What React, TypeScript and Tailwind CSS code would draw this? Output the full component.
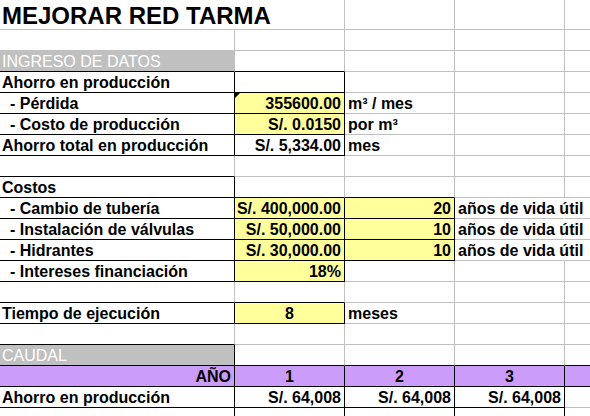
import React from "react";

type Fill = "yellow" | "gray" | "purple" | undefined;
type Align = "l" | "li" | "u" | "r" | "c";
type Cell = { t?: string; a?: Align; fill?: Fill; tri?: boolean; noRight?: boolean };
type Row = { cells: Cell[]; box: number[]; title?: boolean };

const E: Cell = {};

const rows: Row[] = [
  { title: true, cells: [{ t: "MEJORAR RED TARMA" }, E, E, E, E], box: [0, 0, 0, 0, 0] },
  { cells: [E, E, E, E, E], box: [0, 0, 0, 0, 0] },
  { cells: [{ t: "INGRESO DE DATOS", a: "l", fill: "gray" }, E, E, E, E], box: [0, 0, 0, 0, 0] },
  { cells: [{ t: "Ahorro en producción", a: "l" }, E, E, E, E], box: [1, 1, 0, 0, 0] },
  {
    cells: [{ t: "- Pérdida", a: "li" }, { t: "355600.00", a: "r", fill: "yellow", tri: true }, { t: "m³ / mes", a: "u" }, E, E],
    box: [1, 1, 0, 0, 0],
  },
  {
    cells: [{ t: "- Costo de producción", a: "li" }, { t: "S/. 0.0150", a: "r", fill: "yellow" }, { t: "por m³", a: "u" }, E, E],
    box: [1, 1, 0, 0, 0],
  },
  {
    cells: [{ t: "Ahorro total en producción", a: "l" }, { t: "S/. 5,334.00", a: "r" }, { t: "mes", a: "u" }, E, E],
    box: [1, 1, 0, 0, 0],
  },
  { cells: [E, E, E, E, E], box: [0, 0, 0, 0, 0] },
  { cells: [{ t: "Costos", a: "l" }, E, E, E, E], box: [1, 0, 0, 0, 0] },
  {
    cells: [
      { t: "- Cambio de tubería", a: "li" },
      { t: "S/. 400,000.00", a: "r", fill: "yellow" },
      { t: "20", a: "r", fill: "yellow" },
      { t: "años de vida útil", a: "u", noRight: true },
      E,
    ],
    box: [1, 1, 1, 0, 0],
  },
  {
    cells: [
      { t: "- Instalación de válvulas", a: "li" },
      { t: "S/. 50,000.00", a: "r", fill: "yellow" },
      { t: "10", a: "r", fill: "yellow" },
      { t: "años de vida útil", a: "u", noRight: true },
      E,
    ],
    box: [1, 1, 1, 0, 0],
  },
  {
    cells: [
      { t: "- Hidrantes", a: "li" },
      { t: "S/. 30,000.00", a: "r", fill: "yellow" },
      { t: "10", a: "r", fill: "yellow" },
      { t: "años de vida útil", a: "u", noRight: true },
      E,
    ],
    box: [1, 1, 1, 0, 0],
  },
  {
    cells: [{ t: "- Intereses financiación", a: "li" }, { t: "18%", a: "r", fill: "yellow" }, E, E, E],
    box: [1, 1, 0, 0, 0],
  },
  { cells: [E, E, E, E, E], box: [0, 0, 0, 0, 0] },
  {
    cells: [{ t: "Tiempo de ejecución", a: "l" }, { t: "8", a: "c", fill: "yellow" }, { t: "meses", a: "u" }, E, E],
    box: [1, 1, 0, 0, 0],
  },
  { cells: [E, E, E, E, E], box: [0, 0, 0, 0, 0] },
  { cells: [{ t: "CAUDAL", a: "l", fill: "gray" }, E, E, E, E], box: [1, 0, 0, 0, 0] },
  {
    cells: [
      { t: "AÑO", a: "r", fill: "purple" },
      { t: "1", a: "c", fill: "purple" },
      { t: "2", a: "c", fill: "purple" },
      { t: "3", a: "c", fill: "purple" },
      { fill: "purple" },
    ],
    box: [1, 1, 1, 1, 1],
  },
  {
    cells: [
      { t: "Ahorro en producción", a: "l" },
      { t: "S/. 64,008", a: "r" },
      { t: "S/. 64,008", a: "r" },
      { t: "S/. 64,008", a: "r" },
      E,
    ],
    box: [1, 1, 1, 1, 0],
  },
  { cells: [E, E, E, E, E], box: [1, 1, 1, 1, 0] },
];

function boxed(r: number, c: number) {
  if (r < 0 || r >= rows.length || c < 0 || c > 4) return false;
  return rows[r].box[c] === 1;
}

function cellClass(r: number, c: number) {
  const row = rows[r];
  const cell = row.cells[c];
  const cls: string[] = ["relative box-border whitespace-nowrap border-b"];
  cls.push(row.title ? "h-[30px]" : "h-[21px]");
  cls.push(boxed(r, c) || boxed(r + 1, c) ? "border-b-black" : "border-b-[#c0c0c0]");
  if (c < 4) {
    cls.push("border-r");
    if ((row.title && c === 0) || cell.noRight) cls.push("border-r-transparent");
    else if (boxed(r, c) || boxed(r, c + 1)) cls.push("border-r-black");
    else cls.push("border-r-[#c0c0c0]");
  }
  if (cell.fill === "yellow") cls.push("bg-[#ffff9c]");
  if (cell.fill === "gray") cls.push("bg-[#c0c0c0] text-white font-normal");
  else if (!row.title) cls.push("font-bold");
  if (cell.fill === "purple") cls.push("bg-[#cc9cfa]");
  if (row.title) {
    cls.push("text-[24px] leading-[29px] pt-[1px] pl-[2px] font-bold");
  } else {
    cls.push("text-[16px] leading-[22px]");
    if (cell.a === "l") cls.push("text-left pl-[2px]");
    if (cell.a === "li") cls.push("text-left pl-[10px]");
    if (cell.a === "u") cls.push("text-left pl-[3px]");
    if (cell.a === "r") cls.push("text-right pr-[3px]");
    if (cell.a === "c") cls.push("text-center");
  }
  return cls.join(" ");
}

export default function App() {
  return (
    <div className="w-[590px] h-[416px] overflow-hidden bg-white text-black font-['Liberation_Sans',Arial,sans-serif]">
      <div className="grid grid-cols-[235px_110px_110px_110px_1fr]">
        {rows.map((row, r) =>
          row.cells.map((cell, c) => (
            <div key={`${r}-${c}`} className={cellClass(r, c)}>
              {cell.tri && (
                <svg className="absolute left-0 top-0" width="6" height="6" viewBox="0 0 6 6">
                  <polygon points="0,0 5,0 0,5" fill="#000" />
                </svg>
              )}
              {cell.t}
            </div>
          ))
        )}
      </div>
    </div>
  );
}
